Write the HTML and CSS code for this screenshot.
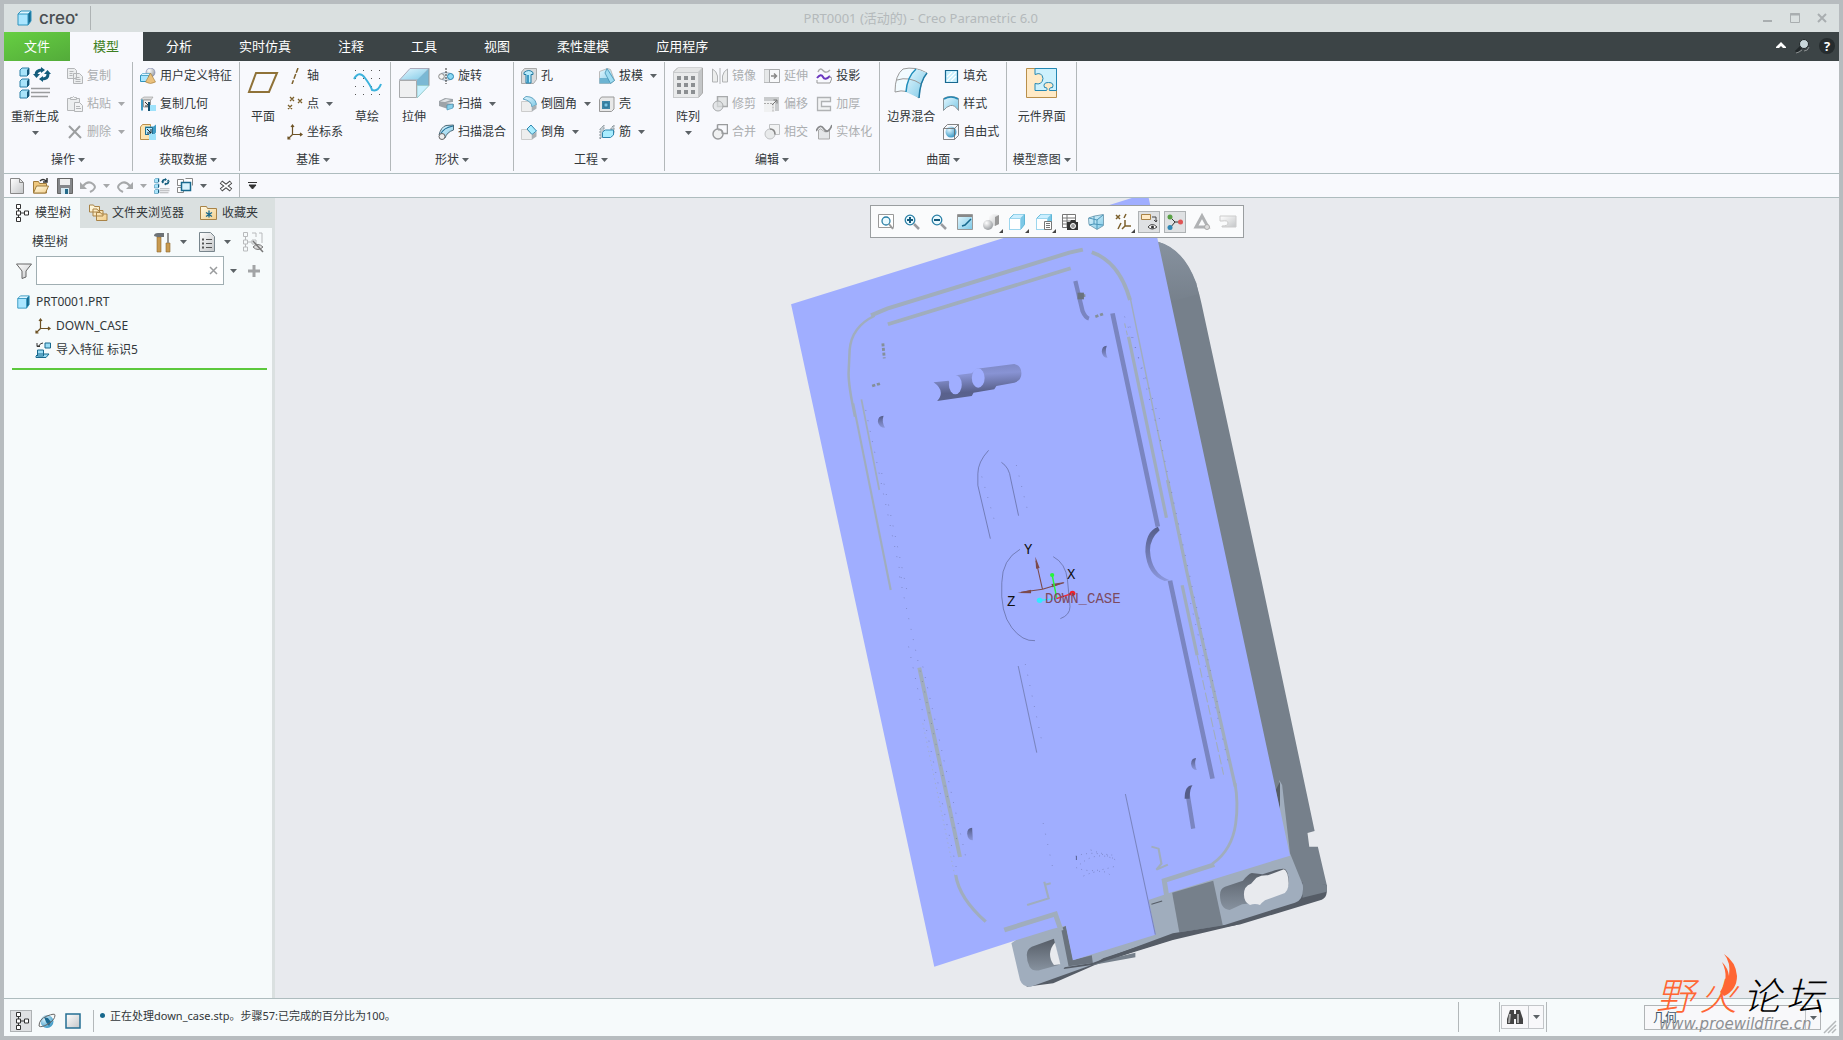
FILE: index.html
```html
<!DOCTYPE html>
<html lang="zh-CN">
<head>
<meta charset="utf-8">
<title>PRT0001 (活动的) - Creo Parametric 6.0</title>
<link rel="stylesheet" href="styles.css">
</head>
<body>
<svg class="defs" aria-hidden="true">
<defs>
<linearGradient id="blue" x1="0" y1="0" x2="1" y2="1"><stop offset="0" stop-color="#e6f8ff"/><stop offset="1" stop-color="#7cc8e6"/></linearGradient>
<linearGradient id="gray" x1="0" y1="0" x2="1" y2="1"><stop offset="0" stop-color="#fff"/><stop offset="1" stop-color="#c4c6c8"/></linearGradient>
<linearGradient id="gold" x1="0" y1="0" x2="1" y2="1"><stop offset="0" stop-color="#fffbe6"/><stop offset="1" stop-color="#f3cf8c"/></linearGradient>
<radialGradient id="ball" cx=".35" cy=".3" r=".8"><stop offset="0" stop-color="#fff"/><stop offset="1" stop-color="#909498"/></radialGradient>
<radialGradient id="bball" cx=".35" cy=".3" r=".8"><stop offset="0" stop-color="#e0f6ff"/><stop offset="1" stop-color="#2a8fc0"/></radialGradient>
<linearGradient id="slot" x1="0" y1="0" x2="0" y2="1"><stop offset="0" stop-color="#555c66"/><stop offset="1" stop-color="#87929f"/></linearGradient>
<linearGradient id="side" x1="0" y1="0" x2="0" y2="1"><stop offset="0" stop-color="#87929f"/><stop offset="1" stop-color="#76808b"/></linearGradient>
<linearGradient id="tube" x1="0" y1="0" x2=".15" y2="1"><stop offset="0" stop-color="#7a85c0"/><stop offset=".35" stop-color="#8893d4"/><stop offset=".8" stop-color="#59618c"/><stop offset="1" stop-color="#5a638e"/></linearGradient>
<linearGradient id="dent" x1="0" y1="0" x2="0" y2="1"><stop offset="0" stop-color="#555d88"/><stop offset="1" stop-color="#8b97dc"/></linearGradient>
<symbol id="cube" viewBox="0 0 16 16"><path d="M2 4l3-3h10l-3 3z" fill="#dff6ff"/><path d="M12 4l3-3v10l-3 4z" fill="#17688d"/><path d="M2 4h10v11H2z" fill="#aae6ff"/><path d="M2 15V4l3-3h10v10l-3 4zM2 4h10v11M12 4l3-3" fill="none" stroke="#2f94be"/></symbol>
<symbol id="copy" viewBox="0 0 16 16"><path d="M.5.5h7l2 2v8h-9zM6.500 5.500h6l3 3v7h-9z" fill="#eceeef" stroke="#b4b6b8"/><path d="M2.500 3.500h4M2.500 5.500h3M2.500 7.500h3M8.500 9.500h4M8.500 11.500h5M8.500 13.500h5" stroke="#b4b6b8"/></symbol>
<symbol id="paste" viewBox="0 0 16 16"><path d="M.5 2.500h12v12H.5z" fill="#eceeef" stroke="#b4b6b8"/><path d="M3.500 3.500V1.500h2l1-1 1 1h2v2zM7.500 6.500h5l3 3v6h-8z" fill="#f2f3f4" stroke="#b4b6b8"/><path d="M9 10.500h4M9 12.500h5" stroke="#b4b6b8"/></symbol>
<symbol id="del" viewBox="0 0 16 16"><path d="M2 2l12 12M13 2L2 14" stroke="#9c9ea0" stroke-width="2"/></symbol>
<symbol id="udf" viewBox="0 0 16 16"><circle cx="10.500" cy="4.500" r="4.500" fill="url(#ball)" stroke="#7a84b8" stroke-width=".6"/><path d="M.5 7.500h8v6h-8z" fill="#aae6ff" stroke="#2f94be"/><path d="M.5 7.500l2-2h8l-2 2z" fill="#dff6ff" stroke="#2f94be" stroke-width=".6"/><path d="M10.500 5l5 9q-5 3-10 0z" fill="#eac07c" stroke="#a07838" stroke-width=".6"/></symbol>
<symbol id="cgeo" viewBox="0 0 16 16"><path d="M1 3l3-2h9l-2 3H1z" fill="#ddd" stroke="#999" stroke-width=".6"/><path d="M1 3.500h2v11H1z" fill="#3f9bc4"/><path d="M3.500 4h7v7h-7z" fill="#eee" stroke="#999"/><path d="M5 6l4 4M9 6v4H5" stroke="#333" fill="none"/><path d="M8 6h2v9H8z" fill="#134f6e"/><path d="M10 9h6v6h-6z" fill="#9fe2fb"/></symbol>
<symbol id="wrap" viewBox="0 0 16 16"><path d="M.5 3l2-2.500h8v15h-10z" fill="#fde4b0" stroke="#b98f4b"/><path d="M5 2.500h8.500L16 .5v8L14 11H5z" fill="#3f9bc4"/><path d="M5.500 3.500h7v7h-7z" fill="#aae6ff" stroke="#1f6c90"/><path d="M7 5l4 4M11 5v4H7" stroke="#222" fill="none"/><path d="M9 10h7v6H9z" fill="#9fe2fb"/></symbol>
<symbol id="axis" viewBox="0 0 16 16"><path d="M11 0L5 16" stroke="#7c602c" stroke-width="1.500" stroke-dasharray="5 1.500"/></symbol>
<symbol id="pts" viewBox="0 0 16 16"><path d="M3 1l4 4M7 1L3 5M11 3l4 4M15 3l-4 4M1 9l4 4M5 9l-4 4" stroke="#7c602c" stroke-width="1.300"/></symbol>
<symbol id="csys" viewBox="0 0 16 16"><path d="M5.500 1v9.500H15M5.500 10.500L1 15M4 3l1.500-2L7 3M13 9l2 1.500-2 1.500M1 12.500V15h2.500" fill="none" stroke="#6d5225" stroke-width="1.200"/></symbol>
<symbol id="rev" viewBox="0 0 16 16"><path d="M3 5.500q4-2 10 0v6q-6 2-9 0" fill="#dfe9ee" stroke="#9ab"/><circle cx="3.500" cy="8.500" r="2.800" fill="#f4f4f4" stroke="#888"/><circle cx="12.500" cy="8.500" r="3" fill="#8cd8f4" stroke="#2f86ae"/><path d="M8 0v16" stroke="#333" stroke-dasharray="2 1"/></symbol>
<symbol id="sweep" viewBox="0 0 16 16"><path d="M1 5l6-3 8 1v3l-7 1 8 1v3l-6 2-9-3z" fill="#9da3a8"/><path d="M2 5.500l6-2.500 5 1-6 2z" fill="#e2e5e8"/><path d="M9 9l6-1v4l-6 2z" fill="#8bd0ea" stroke="#3a8cb0" stroke-width=".6"/></symbol>
<symbol id="swb" viewBox="0 0 16 16"><path d="M1 11Q3 3 8 1.500L15.500 1v5Q9 8 7 14z" fill="url(#blue)" stroke="#4d6a78"/><path d="M3 10q2-6 12-8" stroke="#1d6c94" stroke-width="1.200" fill="none"/><circle cx="4" cy="12.500" r="3" fill="#eee" stroke="#666"/></symbol>
<symbol id="hole" viewBox="0 0 16 16"><path d="M.5 4l3-3.500h12v11l-3 4H.5z" fill="#d9dbdd" stroke="#aaa"/><path d="M3 4.500q5-4 9 0v2h-2v8.500H5V6.500H3z" fill="#b9ecfd" stroke="#227ba3"/><path d="M6 7h2v8H6z" fill="#3f9bc4"/></symbol>
<symbol id="round" viewBox="0 0 16 16"><path d="M.5 5.500H8q3 2 3 5v5H.5z" fill="#eee" stroke="#ccc"/><path d="M2 3L5 .5q9 0 10.500 8L11 11Q11 5 2 3z" fill="url(#blue)" stroke="#5fa4c2"/><path d="M11 11l4.500-2.500v4L11 15.500z" fill="#aab0b4"/></symbol>
<symbol id="chamf" viewBox="0 0 16 16"><path d="M.5 5.500H6l5 5v5H.5z" fill="#eee" stroke="#ccc"/><path d="M6 5l4-4 5.500 6L11 10.500z" fill="#a9edff" stroke="#2f86ae"/><path d="M11 11l4.500-3.500v5L11 15.500z" fill="#aab0b4"/></symbol>
<symbol id="draft" viewBox="0 0 16 16"><path d="M.5 3.500l8-3 3 1 4 11-4 3H.5z" fill="url(#blue)" stroke="#bbb"/><path d="M.5 10h10v5.500H.500z" fill="#6db4d2"/><path d="M8 .5l7.500 12-4 3L6 5z" fill="#9fdcf2" stroke="#3487ab" stroke-width=".7"/></symbol>
<symbol id="shell" viewBox="0 0 16 16"><path d="M.5 3.500l2-2.500h12.500v12l-2.500 2.500H.5z" fill="#e8e8e8" stroke="#999"/><path d="M3 5h8v8H3z" fill="#3f87a8"/><path d="M5 7h4v4H5z" fill="#7cc8e6" stroke="#2a6f90"/></symbol>
<symbol id="rib" viewBox="0 0 16 16"><path d="M1 15V5l4-4v10zM12 12V4l3-3v9z" fill="#c2ccd2" stroke="#8a9499" stroke-dasharray="2 1"/><path d="M3.500 8.500q1-2 3-2.500h8v5l-3 2.500h-8z" fill="#a9edff" stroke="#2f86ae"/></symbol>
<symbol id="mirror" viewBox="0 0 16 16"><path d="M.5 1q4 2 5 7v6H.5zM15.500 1q-4 2-5 7v6h5z" fill="#eceded" stroke="#b0b2b4"/><path d="M8 0v16" stroke="#b0b2b4"/></symbol>
<symbol id="trim" viewBox="0 0 16 16"><path d="M5.500.5h10v10h-10z" fill="#e3e5e6" stroke="#a8aaac" stroke-width="1.500"/><circle cx="6" cy="10" r="5" fill="#dcdee0" fill-opacity=".7" stroke="#a8aaac"/></symbol>
<symbol id="merge" viewBox="0 0 16 16"><path d="M5.500.5h10v9h-5" fill="none" stroke="#999b9d" stroke-width="1.500"/><path d="M5.500.5v5" stroke="#999b9d" stroke-width="1.500"/><circle cx="6" cy="10" r="5" fill="#f0f1f2" stroke="#999b9d" stroke-width="1.500"/><path d="M6 6h4v4" fill="none" stroke="#999b9d"/></symbol>
<symbol id="inter" viewBox="0 0 16 16"><path d="M5.500.5h10v10h-10z" fill="#f2f3f4" stroke="#c0c2c4"/><circle cx="6" cy="10" r="5" fill="#e8eaeb" stroke="#c0c2c4"/><path d="M6 5q5 0 5 5.500" fill="none" stroke="#888" stroke-width="1.500"/></symbol>
<symbol id="extend" viewBox="0 0 16 16"><path d="M0 1.500h15.500v13H0z" fill="#e6e8e9" stroke="#b8babc"/><path d="M5.500 1.500h10v13h-10z" fill="#f8f9fb" stroke="#a8aaac"/><path d="M7 8h5M10 5.500L12.500 8 10 10.500" stroke="#888" stroke-width="1.500" fill="none"/></symbol>
<symbol id="offset" viewBox="0 0 16 16"><path d="M0 1h15v14h-4V5H0z" fill="#c9cbcd"/><path d="M0 5h11v11H0z" fill="#f0f1f2"/><path d="M0 7.500h9v8" fill="none" stroke="#aaa" stroke-dasharray="2 1"/><path d="M8 9l5-5M9.500 4H13v3.500" fill="none" stroke="#777"/></symbol>
<symbol id="project" viewBox="0 0 16 16"><path d="M2 4q2-5 5-1.500T14 2" fill="none" stroke="#aaa" stroke-width="1.500"/><path d="M1 10q4-5 6-1t7-1" fill="none" stroke="#6b36c0" stroke-width="2"/><path d="M1 12v3h13l2-5-3-1" fill="none" stroke="#999"/></symbol>
<symbol id="thick" viewBox="0 0 16 16"><path d="M1.500 1.500h13v4h-9v5h9v4h-13z" fill="#f2f3f4" stroke="#b0b2b4" stroke-width="1.300"/></symbol>
<symbol id="solid" viewBox="0 0 16 16"><path d="M2.500 6v9h11V5Q9 10 6.500 6q-2-2.500-4 0z" fill="#e4e6e8" stroke="#aaa"/><path d="M0 7Q4-1 8 5t8-4" fill="none" stroke="#88898b" stroke-width="1.800"/></symbol>
<symbol id="fill" viewBox="0 0 16 16"><path d="M2.500 2.500h12v12h-12z" fill="#c5effd" stroke="#186890" stroke-width="1.200"/><path d="M4 9l5-5M4 13l9-9M8 13l5-5" stroke="#fff" stroke-width="1.200"/></symbol>
<symbol id="style" viewBox="0 0 16 16"><path d="M.5 2.500q7-4 15 0v12q-4-6-8-5t-7 5z" fill="url(#blue)" stroke="#8a9499"/><path d="M1 3q7-4 14 0" fill="none" stroke="#2387b4" stroke-width="1.500"/></symbol>
<symbol id="free" viewBox="0 0 16 16"><circle cx="8" cy="8" r="5.500" fill="url(#bball)"/><path d="M.5 4.500l4-4h11v11l-4 4H.5zM.5 4.500h11v11M11.500 4.500l4-4" fill="none" stroke="#666" stroke-width=".8"/></symbol>
<symbol id="tree" viewBox="0 0 14 18"><path d="M1.500.5h4v4h-4zM1.500 7h4v4h-4zM1.500 13.500h4v4h-4zM9.500 7h4v4h-4z" fill="#fff" stroke="#333"/><path d="M3.500 5v2M3.500 11v2.500M6 9h3.500" stroke="#333"/></symbol>
<symbol id="lens" viewBox="0 0 16 16"><circle cx="6" cy="6" r="4.800" fill="#eafaff" stroke="#2a7fa6" stroke-width="1.300"/><path d="M10 10l5 5" stroke="#9a9ca0" stroke-width="2.500"/></symbol>
<symbol id="import" viewBox="0 0 16 16"><path d="M10 1h5.500v5H10zM1 14l2-2h11l-3 3.500H1zM2.500 8h6v6h-6z" fill="#9adcf5" stroke="#17688d"/><path d="M2 4h2q1-3 4-3M2 1v3.500h3" fill="none" stroke="#333"/></symbol>
<symbol id="regen" viewBox="0 0 32 32"><path d="M1 3l2-2h7v6l-2 2H1zM1 14l2-2h7v6l-2 2H1zM1 25l2-2h7v6l-2 2H1z" fill="#a8e4fb" stroke="#2b7fa6"/><path d="M8 3l2-2v6L8 9zM8 14l2-2v6l-2 2zM8 25l2-2v6l-2 2z" fill="#17587a"/><path d="M12 21.500h19M12 25.500h19M12 29.500h17" stroke="#9a9c9e" stroke-width="1.500"/><path d="M17 8q0-5 6-5M29 7q0 5-6 5" fill="none" stroke="#135c7c" stroke-width="3"/><path d="M14 7h7l-3.500 4zM25 7h7l-3.500-4zM22 0v6l4-3zM24 9v6l-4-3z" fill="#135c7c"/></symbol>
<symbol id="down" viewBox="0 0 7 4"><path d="M0 0h7L3.500 4z" fill="currentColor"/></symbol>
<symbol id="scube" viewBox="0 0 16 16"><path d="M.5 4.500l4-4h11v10l-4 5H.5z" fill="#7cc8e6" stroke="#5fb6d6"/><path d="M1 4.500l4-4h10l-4 4z" fill="#ccefff"/><path d="M.5 4.500h11v11H.5z" fill="#fff" stroke="#9cd6ee"/></symbol>
</defs>
</svg>

<div class="window">
<header class="titlebar">
  <span class="brand"><svg width="16" height="16"><use href="#cube"/></svg>creo<sup>•</sup></span>
  <span class="caption">PRT0001 (活动的) - Creo Parametric 6.0</span>
  <span class="wincontrols">
    <button aria-label="最小化"><svg width="10" height="10"><path d="M0 8h9" stroke="currentColor" stroke-width="2"/></svg></button>
    <button aria-label="最大化"><svg width="10" height="10"><path d="M.5.5h9v9h-9z" stroke="currentColor" fill="none"/><path d="M0 1.500h10" stroke="currentColor" stroke-width="2"/></svg></button>
    <button aria-label="关闭"><svg width="10" height="10"><path d="M1 1l8 8M9 1L1 9" stroke="currentColor" stroke-width="2"/></svg></button>
  </span>
</header>
<nav class="tabs">
  <button class="file">文件</button><button class="active">模型</button><button>分析</button><button>实时仿真</button><button>注释</button><button>工具</button><button>视图</button><button>柔性建模</button><button>应用程序</button>
  <span class="tabtools">
    <button aria-label="折叠功能区"><svg width="12" height="7"><path d="M1 5l5-5 5 5v1H8L6 4 4 6H1z" fill="#fff"/></svg></button>
    <button aria-label="搜索"><svg width="16" height="16"><path d="M6 9l-5 5" stroke="#22282a" stroke-width="3"/><path d="M1 15l3-1 3-2M9 13q4 0 5-4" fill="none" stroke="#8a8f90"/><circle cx="9" cy="6" r="4.500" fill="#c8d6da" stroke="#22282a"/></svg></button>
    <button class="help" aria-label="帮助">?</button>
  </span>
</nav>

<section class="ribbon">
  <div class="group"><div class="body">
    <button class="big wide"><svg width="32" height="32"><use href="#regen"/></svg>重新生成<svg class="dn" width="7" height="4"><use href="#down"/></svg></button>
    <div class="col off">
      <button><svg width="16" height="16"><use href="#copy"/></svg>复制</button>
      <button><svg width="16" height="16"><use href="#paste"/></svg>粘贴<svg class="dn" width="7" height="4"><use href="#down"/></svg></button>
      <button><svg width="16" height="16"><use href="#del"/></svg>删除<svg class="dn" width="7" height="4"><use href="#down"/></svg></button>
    </div></div><button class="label">操作<svg width="7" height="4"><use href="#down"/></svg></button></div>

  <div class="group flat"><div class="body"><div class="col">
      <button><svg width="16" height="16"><use href="#udf"/></svg>用户定义特征</button>
      <button><svg width="16" height="16"><use href="#cgeo"/></svg>复制几何</button>
      <button><svg width="16" height="16"><use href="#wrap"/></svg>收缩包络</button>
    </div></div><button class="label">获取数据<svg width="7" height="4"><use href="#down"/></svg></button></div>

  <div class="group datum"><div class="body">
    <button class="big"><svg width="32" height="32"><path d="M9 6h21l-8 19H2z" fill="none" stroke="#8f7238" stroke-width="2"/></svg>平面</button>
    <div class="col">
      <button><svg width="16" height="16"><use href="#axis"/></svg>轴</button>
      <button><svg width="16" height="16"><use href="#pts"/></svg>点<svg class="dn" width="7" height="4"><use href="#down"/></svg></button>
      <button><svg width="16" height="16"><use href="#csys"/></svg>坐标系</button>
    </div>
    <button class="big slim"><svg width="32" height="32"><path d="M4 3.500h26M4 11.500h26M4 19.500h26M4 27.500h26" stroke="#555" stroke-dasharray="1 7"/><path d="M3 12Q8 3 14 11t7 12q6 2 9-6" fill="none" stroke="#3bb2dc" stroke-width="2"/></svg>草绘</button>
    </div><button class="label">基准<svg width="7" height="4"><use href="#down"/></svg></button></div>

  <div class="group"><div class="body">
    <button class="big"><svg width="32" height="32"><path d="M1.500 13L12 1.500h19L20 13z" fill="url(#blue)" stroke="#aab"/><path d="M19 13L31 1.500v17H19z" fill="#7ab8d4"/><path d="M19 18.500h12L19 31z" fill="#c8f1ff" stroke="#9cc"/><path d="M31 1.500v17" stroke="#999"/><path d="M1.500 13.500h17v17h-17z" fill="#eff0f1" stroke="#a8aaac"/></svg>拉伸</button>
    <div class="col">
      <button><svg width="16" height="16"><use href="#rev"/></svg>旋转</button>
      <button><svg width="16" height="16"><use href="#sweep"/></svg>扫描<svg class="dn" width="7" height="4"><use href="#down"/></svg></button>
      <button><svg width="16" height="16"><use href="#swb"/></svg>扫描混合</button>
    </div></div><button class="label">形状<svg width="7" height="4"><use href="#down"/></svg></button></div>

  <div class="group flat"><div class="body">
    <div class="col">
      <button><svg width="16" height="16"><use href="#hole"/></svg>孔</button>
      <button><svg width="16" height="16"><use href="#round"/></svg>倒圆角<svg class="dn" width="7" height="4"><use href="#down"/></svg></button>
      <button><svg width="16" height="16"><use href="#chamf"/></svg>倒角<svg class="dn" width="7" height="4"><use href="#down"/></svg></button>
    </div>
    <div class="col">
      <button><svg width="16" height="16"><use href="#draft"/></svg>拔模<svg class="dn" width="7" height="4"><use href="#down"/></svg></button>
      <button><svg width="16" height="16"><use href="#shell"/></svg>壳</button>
      <button><svg width="16" height="16"><use href="#rib"/></svg>筋<svg class="dn" width="7" height="4"><use href="#down"/></svg></button>
    </div></div><button class="label">工程<svg width="7" height="4"><use href="#down"/></svg></button></div>

  <div class="group"><div class="body">
    <button class="big"><svg width="32" height="32"><path d="M1.500 5l4-4h25v25l-4 4.500h-25z" fill="#c4c6c8" stroke="#aaa"/><path d="M2 5l4-4h24l-4 4z" fill="#e4e5e6"/><path d="M1.500 5.500h25v25h-25z" fill="#e9eaeb" stroke="#c8cacc"/><path d="M5 11h18M5 18h18M5 25h18" stroke="#8c8f92" stroke-width="4" stroke-dasharray="4 3"/></svg>阵列<svg class="dn" width="7" height="4"><use href="#down"/></svg></button>
    <div class="col off">
      <button><svg width="16" height="16"><use href="#mirror"/></svg>镜像</button>
      <button><svg width="16" height="16"><use href="#trim"/></svg>修剪</button>
      <button><svg width="16" height="16"><use href="#merge"/></svg>合并</button>
    </div>
    <div class="col off">
      <button><svg width="16" height="16"><use href="#extend"/></svg>延伸</button>
      <button><svg width="16" height="16"><use href="#offset"/></svg>偏移</button>
      <button><svg width="16" height="16"><use href="#inter"/></svg>相交</button>
    </div>
    <div class="col off">
      <button class="on"><svg width="16" height="16"><use href="#project"/></svg>投影</button>
      <button><svg width="16" height="16"><use href="#thick"/></svg>加厚</button>
      <button><svg width="16" height="16"><use href="#solid"/></svg>实体化</button>
    </div></div><button class="label">编辑<svg width="7" height="4"><use href="#down"/></svg></button></div>

  <div class="group"><div class="body">
    <button class="big wide"><svg width="32" height="32"><path d="M0 25Q0 8 8 2q12-3 24 4-7 8-8 25-12-10-24-6z" fill="#f2fbff" stroke="#999"/><path d="M11 25Q12 10 21 2l11 4q-7 8-8 25z" fill="url(#blue)"/><path d="M2 13q12-4 24 4" fill="none" stroke="#999"/><path d="M11 25Q12 10 21 2" fill="none" stroke="#1f8ebc" stroke-width="1.500"/><path d="M32 6q-7 8-8 25" fill="none" stroke="#1f7aa4" stroke-width="1.500"/></svg>边界混合</button>
    <div class="col">
      <button><svg width="16" height="16"><use href="#fill"/></svg>填充</button>
      <button><svg width="16" height="16"><use href="#style"/></svg>样式</button>
      <button><svg width="16" height="16"><use href="#free"/></svg>自由式</button>
    </div></div><button class="label">曲面<svg width="7" height="4"><use href="#down"/></svg></button></div>

  <div class="group"><div class="body">
    <button class="big widest"><svg width="32" height="32"><path d="M.5 1.500h30v29H.5z" fill="#ffeac6" stroke="#b98f4b"/><path d="M9 1.500h21.500v22h-7q-1-3 3-3 2-5-4-5-6 0-4 5 4 0 2 3H9v-7q7 2 8-5-1-7-8-4z" fill="#cdf1fd" stroke="#2387b4"/></svg>元件界面</button>
    </div><button class="label">模型意图<svg width="7" height="4"><use href="#down"/></svg></button></div>
</section>

<div class="quick">
  <button aria-label="新建"><svg width="16" height="16"><path d="M1.500.5h9l4 4v11h-13z" fill="url(#gray)" stroke="#888"/><path d="M10.500.5v4h4" fill="none" stroke="#888"/></svg></button>
  <button aria-label="打开"><svg width="18" height="16"><path d="M1.500 15V3.500h5l1 2h7V15z" fill="#eec77e" stroke="#a07c3c"/><path d="M1.500 15l3-7h12l-3 7z" fill="url(#gold)" stroke="#a07c3c"/><path d="M8 3q3-3 6 0M15 0v4h-4" fill="none" stroke="#333" stroke-width="1.500"/></svg></button>
  <button aria-label="保存"><svg width="16" height="16"><path d="M.5.5h15v15H.5z" fill="#85878a" stroke="#666"/><path d="M3 1h10v6H3z" fill="#eee"/><path d="M4 10h8v6H4z" fill="#d8eaf2"/><path d="M8 11h3v5H8z" fill="#246a8a"/></svg></button>
  <button class="dim" aria-label="撤消"><svg width="16" height="16"><path d="M3 8q5-6 10-2t-3 8" fill="none" stroke="#a6a8aa" stroke-width="2"/><path d="M0 4v7h7z" fill="#a6a8aa"/></svg><svg width="7" height="4"><use href="#down"/></svg></button>
  <button class="dim" aria-label="重做"><svg width="16" height="16"><path d="M13 8Q8 2 3 6t3 8" fill="none" stroke="#a6a8aa" stroke-width="2"/><path d="M16 4v7H9z" fill="#a6a8aa"/></svg><svg width="7" height="4"><use href="#down"/></svg></button>
  <button aria-label="重新生成"><svg width="16" height="16"><use href="#regen"/></svg></button>
  <button aria-label="窗口"><svg width="16" height="16"><path d="M.5 1.500h6v6h-6zM8.500.5h7v7M.5 9.500h6v5h-6z" fill="#fff" stroke="#888"/><path d="M4.500 4.500h9v8h-9z" fill="#d8f2fc" stroke="#17688d" stroke-width="1.500"/></svg><svg width="7" height="4"><use href="#down"/></svg></button>
  <button class="shut" aria-label="关闭窗口"><svg width="12" height="12"><path d="M1 2l10 8M11 2L1 10" stroke="#444" stroke-width="4"/><path d="M1.500 2.500l9 7M10.500 2.500l-9 7" stroke="#fff" stroke-width="1.800"/></svg></button>
  <button class="more" aria-label="自定义"><svg width="9" height="8"><path d="M0 .5h9M1 3h7L4.500 7z" stroke="#333" fill="#333"/></svg></button>
</div>

<main>
<aside>
  <div class="ptabs">
    <button class="active"><svg width="14" height="18"><use href="#tree"/></svg>模型树</button>
    <button><svg width="20" height="20"><path d="M1.500 9V2h4l1 1.500h5V9zM5 13V6h4l1 1.500h5V13zM8.500 17.500v-8h4l1 1.500h5.500v6.500z" fill="url(#gold)" stroke="#a98346"/></svg>文件夹浏览器</button>
    <button><svg width="18" height="16"><path d="M.5 14.500V1.500h6l1 2h9v11z" fill="url(#gold)" stroke="#a98346"/><path d="M9 5.500v7M6 7.500l6 4M12 7.500l-6 4" stroke="#17688d" stroke-width="1.300"/></svg>收藏夹</button>
  </div>
  <div class="phead"><span>模型树</span>
    <button aria-label="设置"><svg width="18" height="20"><path d="M4 5h4v15H4zM13 11h4v9h-4z" fill="#c89a50" stroke="#92692c" stroke-width=".6"/><path d="M1 4q0-3 4-3h6v4H4z" fill="#6d7276"/><path d="M15 1v10" stroke="#888" stroke-width="1.800"/></svg><svg width="7" height="4"><use href="#down"/></svg></button>
    <button aria-label="显示"><svg width="16" height="20"><path d="M.5.5h11l4 4v15H.5z" fill="url(#gray)" stroke="#78858c"/><path d="M7 7.500h6M7 11.500h6M7 15.500h6" stroke="#555"/><path d="M3 7.500h2M3 11.500h2M3 15.500h2" stroke="#555" stroke-width="2"/></svg><svg width="7" height="4"><use href="#down"/></svg></button>
    <button aria-label="隐藏"><svg width="21" height="20"><path d="M.5.5h4v4h-4zM.5 8h4v4h-4zM.5 15h4v4h-4zM9 8h4v4H9zM2.500 5v3M2.500 12v3M5 10h4M9 1h4v4M16 1h3v10" fill="none" stroke="#b8babc"/><path d="M10 15q5-5 10 0-5 5-10 0z" fill="#ddd" stroke="#777"/><path d="M10 9l10 11" stroke="#777" stroke-width="1.500"/></svg></button>
  </div>
  <div class="filter">
    <svg width="16" height="16"><path d="M.5 1h15L10 8v6l-4 1.500V8z" fill="url(#gray)" stroke="#666"/></svg>
    <div class="search"><input type="text" aria-label="过滤"><button aria-label="清除"><svg width="9" height="9"><path d="M1 1l7 7M8 1L1 8" stroke="#9a9c9e" stroke-width="1.500"/></svg></button></div>
    <button aria-label="历史"><svg width="7" height="4"><use href="#down"/></svg></button>
    <button aria-label="添加"><svg width="12" height="12"><path d="M6 0v12M0 6h12" stroke="#a2a4a6" stroke-width="3"/></svg></button>
  </div>
  <ul class="tree">
    <li><svg width="14" height="14"><use href="#cube"/></svg>PRT0001.PRT</li>
    <li class="child"><svg width="16" height="16"><use href="#csys"/></svg>DOWN_CASE</li>
    <li class="child"><svg width="16" height="16"><use href="#import"/></svg>导入特征 标识5</li>
  </ul>
  <hr>
</aside>

<section class="viewport">
<svg class="model" viewBox="777 198 560 800" width="560" height="800">
<g transform="translate(780 190) scale(.35714 .33333)">
  <path d="M1058 155Q1150 185 1180 340L1348 1170 1497 1923 1477 1929 1482 1970 1506 1970 1531 2085 1463 2100 1200 2100z" fill="#76808b"/>
  <path d="M1058 155Q1130 175 1166 280L1172 312 1080 340z" fill="url(#side)"/>
  <g transform="translate(0 1170)">
    <path d="M1531 915v22q-2 18-14 22L1290 1033 1180 1054 1094 1080 997 1112 880 1156 765 1210 690 1220 800 1060 1400 900z" fill="#555c66"/>
    <path d="M1463 900l68 15v20l-68 18z" fill="#76808b"/>
    <path d="M875 1148l120-30v14l-115 22z" fill="#76808b"/>
    <path d="M1398 600l8 15L1428 820l36 95q4 45-22 53L1245 1035 1110 1062 905 1135 880 1152 702 1220Q680 1222 672 1200L648 1090 760 1000 1060 850 1398 800z" fill="#a0adbd"/>
    <path d="M1098 938l115-36 27 135-122 20z" fill="#76808b"/>
    <path d="M1100 1060l145-24 45-4-190 48-226 75-80 12 3-5 80-14z" fill="#555c66"/>
    <path d="M1232 945q0-20 14-25l50-18q15-20 25-23l30 4 35-12q20-7 28-4 11 10 10 40 0 25-20 33l-80 30q-20 2-30 3l-35 17q-27-3-27-45z" fill="url(#slot)"/>
    <path d="M1299 943q0-25 20-32l15-18q15-8 32-7l45-18q12 5 13 42-1 28-16 31l-50 20q-10 8-14 14-14-6-28 0-17-7-17-32z" fill="#e8eaee"/>
    <path d="M691 1125q0-18 14-25l62-24 16 78-52 15q-22 8-32-8-8-16-8-36z" fill="url(#slot)"/>
    <path d="M770 1088l15 65-18 2q-11-15-11-33 2-22 14-34z" fill="#e8eaee"/>
    <path d="M787 1045l14-8 20 103 52-14 3 23-68 10z" fill="#6a737e"/>
    <path d="M1400 605v85l-12-60z" fill="#555c66"/>
  </g>
  <path d="M31 343L985 24l47-2 396 1975-330 109-66 24 19 104-231 77-20-104-38 10-114 38-216 75z" fill="#a0aeff"/>
  <path d="M1040 2143l30-10" stroke="#555c66" stroke-width="3"/>

  <g fill="none" stroke="#a0adbd">
    <path d="M255 376l45-20 510-168 38-9" stroke-width="12"/>
    <path d="M302 403L814 235" stroke-width="11"/>
    <path d="M265 377Q200 410 195 480l-3 70q0 40 18 130" stroke-width="7"/>
    <path d="M205 640L310 1200" stroke-width="6"/>
    <path d="M228 628L278 900" stroke-width="5"/>
    <path d="M873 187Q950 215 980 330" stroke-width="11"/>
    <path d="M980 320l75 390 40 205" stroke-width="4"/>
    <path d="M965 400l15 70" stroke-width="3" stroke-dasharray="14 8"/>
    <path d="M976 440l106 543" stroke-width="9"/>
    <path d="M1085 870l55 280 135 640" stroke-width="9"/>
    <path d="M1126 1186l42 210" stroke-width="9"/>
    <path d="M1168 1396l74 358" stroke-width="3" stroke-dasharray="30 8"/>
    <path d="M1274 1780q10 60 2 120-10 80-66 122" stroke-width="8"/>
    <path d="M1216 2024l-140 48 8 55" stroke-width="14"/>
    <path d="M390 1433l114 568" stroke-width="11"/>
    <path d="M400 1600l92 470" stroke-width="2" stroke-dasharray="4 10"/>
    <path d="M492 2055q10 70 84 140" stroke-width="9"/>
    <path d="M628 2220l143-48 16 50" stroke-width="14"/>
    <path d="M740 2075l12 50-60 20M740 2085l18-5M1040 1970l20 6 8 45-14 18 32-15" stroke-width="6"/>
  </g>
  <path d="M288 460l4 45M258 588l25-8M832 317h24M883 380l26-10" stroke="#848f9a" stroke-width="8" stroke-dasharray="9 5"/>
  <g fill="none" stroke="#7a85c0">
    <path d="M931 370l127 640M1092 1172l119 594" stroke-width="13"/>
    <path d="M827 273l20 90q8 20 18 23M1141 1810l16 106" stroke-width="12"/>
    <path d="M667 1428l52 260M967 1812l84 422" stroke-width="3"/>
  </g>
  <path d="M842 308v20" stroke="#6a737e" stroke-width="18"/>
  <path d="M1058 1010q-35 15-35 75 5 70 54 88l14-2q-52-20-55-90 0-35 27-60z" fill="url(#dent)"/>
  <path d="M1155 1786q-22 0-22 40h14q0-30 8-40z" fill="#555d88"/>
  <g fill="url(#dent)"><path d="M915 467q-14 0-14 18 2 18 16 18-8-18-2-36z"/><path d="M290 677q-16 0-16 18 3 18 20 18-10-18-4-36z"/><path d="M1165 1704q-14 0-14 18 2 18 16 18-8-18-2-36z"/><path d="M538 1913q-14 0-14 18 2 20 16 20z"/></g>
  <path d="M430 577l42-5 6 10 14-26 45-6 14-14 105-14q20 5 20 28 0 22-20 28l-50 10-6 10-58 10-5 10-97 15q25-30-10-56z" fill="url(#tube)"/>
  <ellipse cx="491" cy="584" rx="18" ry="29" fill="#a0aeff"/><ellipse cx="555" cy="564" rx="18" ry="29" fill="#a0aeff"/>
  <g fill="none" stroke="#5d6697" stroke-width="2">
    <path d="M584 781q-30 35-30 70v35l35 160M620 817q22 15 26 50l22 110"/>
    <path d="M672 1078q-50 30-51 100-5 90 28 135 30 42 65 39M765 1100q35 20 40 70l7 80q0 25-27 36"/>
    <path d="M240 660l105 530M285 850l70 350M335 1160l160 790M360 1370l135 670M400 1430l120 570M965 380l105 330M980 410l90 360M1065 750l170 840M1150 1240l110 500M565 860l35 130M662 826l30 130M687 1423l45 225M737 1900l30 150" stroke-dasharray="2 30"/>
    <path d="M828 1998q60-20 110 10M840 2023q50-45 105-10M830 2033q40 20 110-5M850 2058q60-30 80 5M870 1980q40 15 60 15" stroke-dasharray="2 13"/>
    <path d="M830 1998v12" stroke-width="3"/>
  </g>
  <path d="M735 1198l-18-85M735 1198l60-20M735 1198l-60 9" stroke="#7c4a4c" stroke-width="3"/>
  <path d="M715 1100l2 36 10-2zM798 1176l-38 6 3 10zM665 1209l38 1 0-11z" fill="#7c4a4c"/>
  <path d="M762 1155l13 70" stroke="#25f53c" stroke-width="4"/>
  <path d="M774 1226l-47 5" stroke="#33eaff" stroke-width="4"/>
  <path d="M774 1226l45-16" stroke="#f2222c" stroke-width="4"/>
  <circle cx="762" cy="1155" r="6" fill="#25f53c"/><circle cx="727" cy="1231" r="8" fill="#33eaff"/><circle cx="819" cy="1210" r="8" fill="#f2222c"/>
</g>
<g class="cad"><text x="1024" y="554">Y</text><text x="1067" y="579">X</text><text x="1007" y="606">Z</text><text class="name" x="1045" y="603">DOWN_CASE</text></g>
</svg>

<div class="viewtools" role="toolbar">
  <button aria-label="重新调整"><svg width="16" height="16"><path d="M.5.5h15v13H.5z" fill="#fff" stroke="#999"/><circle cx="8" cy="7" r="4" fill="#eafaff" stroke="#2a7fa6" stroke-width="1.300"/><path d="M11 10l4 5" stroke="#999" stroke-width="2"/></svg></button>
  <button aria-label="放大"><svg width="16" height="16"><use href="#lens"/><path d="M3 6h6M6 3v6" stroke="#14587a" stroke-width="2"/></svg></button>
  <button aria-label="缩小"><svg width="16" height="16"><use href="#lens"/><path d="M3 6h6" stroke="#14587a" stroke-width="2"/></svg></button>
  <button aria-label="重画"><svg width="16" height="16"><path d="M.5.5h15v15H.5z" fill="url(#blue)" stroke="#999"/><path d="M1 2h14" stroke="#888" stroke-width="2"/><path d="M5 12l3-1 6-6" stroke="#17688d" stroke-width="1.500" fill="none"/></svg></button>
  <button class="menu" aria-label="渲染"><svg width="16" height="16"><path d="M6 2l4-2 6 1v9l-5 2-5-3z" fill="url(#gray)"/><path d="M12 3l4-2v9l-4 2z" fill="#999"/><circle cx="5" cy="11" r="5" fill="url(#ball)"/></svg></button>
  <button class="menu" aria-label="显示样式"><svg width="16" height="16"><use href="#scube"/></svg></button>
  <button class="menu" aria-label="已保存方向"><svg width="16" height="16"><use href="#scube"/><path d="M8.500 7.500h7v8h-7z" fill="#fff" stroke="#777"/><path d="M10 9.500h4M10 11.500h4M10 13.500h4" stroke="#777"/></svg></button>
  <button aria-label="视图管理器"><svg width="16" height="16"><path d="M.5.5h13v13H.5zM.5 4h13M.5 7h13M.5 10h13M5 .5v13" fill="#fff" stroke="#777"/><path d="M5 8h3l1-2h4l1 2h2v8H5z" fill="#333"/><circle cx="11" cy="12" r="2.500" fill="#999" stroke="#fff"/></svg></button>
  <button aria-label="透视图"><svg width="16" height="16"><path d="M.5 4l6-2 9-1.500v11L9 15.500l-8-5z" fill="url(#blue)" stroke="#7aa4b8"/><path d="M6 2v8l-5 1M6 10l9 1M9 15V6l6-5M9 6L1 4" stroke="#4b95b8" fill="none"/></svg></button>
  <button class="menu" aria-label="基准显示"><svg width="16" height="16"><path d="M1 1l4 4M5 1L1 5M11 0L9 4M6 9l-3 6M10 6v6h6M10 12l-3 3" fill="none" stroke="#7c602c" stroke-width="1.500"/></svg></button>
  <button class="pressed" aria-label="注释显示"><svg width="16" height="16"><path d="M.5.5h9v5h-9z" fill="#ffeac6" stroke="#a98346"/><path d="M11 3h4v5M13 6l2 2 1-2" fill="none" stroke="#444"/><path d="M7 13q4-5 9 0-5 4-9 0z" fill="#fff" stroke="#444"/><circle cx="11.500" cy="13" r="1.500" fill="#333"/></svg></button>
  <button class="pressed" aria-label="旋转中心"><svg width="16" height="16"><path d="M3 3l5 5 6 0M8 8l-5 6" fill="none" stroke="#333"/><circle cx="3" cy="3" r="2.500" fill="#5aa046"/><circle cx="13.500" cy="8" r="2.500" fill="#e05454"/><circle cx="3" cy="13.500" r="2.500" fill="#2f86b4"/></svg></button>
  <button aria-label="模拟"><svg width="16" height="16"><path d="M8 2l6 11H2z" fill="none" stroke="#b0b2b4" stroke-width="3"/><circle cx="13" cy="13" r="2.500" fill="#ddd" stroke="#aaa"/></svg></button>
  <button aria-label="分析"><svg width="16" height="16"><path d="M0 2h16v11H2v-1q6 0 6-3T2 7H0z" fill="url(#gray)" stroke="#ccc"/></svg></button>
</div>
</section>
</main>

<footer>
  <button class="pressed" aria-label="导航器"><svg width="14" height="18"><use href="#tree"/></svg></button>
  <button aria-label="浏览器"><svg width="16" height="16"><circle cx="8" cy="8.500" r="6.500" fill="url(#bball)"/><path d="M5 4l4 1 3 4-2 4-3-4z" fill="#186890"/><path d="M0 13Q0 6 8 3t8-1q0 5-7 9t-9 2z" fill="none" stroke="#666"/></svg></button>
  <button aria-label="全屏"><svg width="16" height="16"><path d="M1 1h14v14H1z" fill="url(#gray)" stroke="#246f94" stroke-width="1.500"/></svg></button>
  <p class="message">正在处理down_case.stp。步骤57:已完成的百分比为100。</p>
  <div class="find"><button aria-label="查找"><svg width="16" height="16"><path d="M3 1h4v4h2V1h4l3 9v5H9v-5H7v5H0v-5z" fill="#444"/><path d="M3 5l-1 9M11 5v9" stroke="#aaa" stroke-width="2"/></svg></button><button class="pick" aria-label="查找选项"><svg width="7" height="4"><use href="#down"/></svg></button></div>
  <div class="combo"><select aria-label="选择过滤器"><option>几何</option></select><span class="pull"><svg width="7" height="4"><use href="#down"/></svg></span></div>
  <svg class="grip" width="12" height="12"><path d="M0 12L12 0M4 12l8-8M8 12l4-4" stroke="#b5b9bb" stroke-width="1.500"/></svg>
</footer>
<div class="watermark">
  <div class="wm-name"><span class="fire">野</span><span class="fire">火</span><span>论</span><span>坛</span></div>
  <div class="wm-url">www.proewildfire.cn</div>
  <svg class="flame" width="18" height="42"><path d="M4 0q12 8 13 22 0 14-13 20l-4-4q10-14 2-30 6 6 7 14Q11 8 4 0z" fill="#ff6633"/></svg>
</div>
</div>
</body>
</html>
```
FILE: styles.css
```css
* { box-sizing: border-box; }
html, body { height: 100%; margin: 0; }
body {
  font: 12px/16px "Noto Sans", "Noto Sans CJK SC", sans-serif;
  color: #32373a;
  background: #b7bcbf;
}
.defs { position: absolute; width: 0; height: 0; }
button { font: inherit; color: inherit; background: none; border: 0; padding: 0; margin: 0; white-space: nowrap; }
svg { flex: none; display: block; overflow: visible; }

.window { position: relative; display: flex; flex-direction: column; height: 100vh; padding: 4px; }

.titlebar { display: flex; align-items: center; height: 28px; flex: none; background: #dae0e0; }
.brand { display: flex; align-items: center; gap: 7px; height: 24px; padding: 0 11px 0 12px; border-right: 1px solid #aeb3b4; font: 500 17px/20px Inter, sans-serif; color: #4a4f52; }
.brand sup { font-size: 8px; line-height: 8px; margin: 0 0 8px -8px; }
.caption { flex: 1; text-align: center; font-size: 13px; color: #b4b9bb; padding-right: 12px; }
.wincontrols { display: flex; gap: 17px; padding-right: 12px; color: #a9aeb0; }

.tabs { display: flex; flex: none; height: 29px; background: #3c4446; color: #fff; font-size: 13px; }
.tabs > button { padding: 0 24px 2px 23px; }
.tabs .file { padding: 0 20px 2px; background: linear-gradient(160deg, #66cf42, #53ab3a); }
.tabs .active { background: #f8f9fd; color: #3d7f22; }
.tabtools { display: flex; align-items: center; gap: 8px; margin-left: auto; padding: 0 4px 2px 0; }
.help { width: 16px; height: 16px; border-radius: 50%; background: #262c2e; font: bold 13px/16px "Open Sans", sans-serif; }

.ribbon { display: flex; flex: none; height: 113px; padding: 1px 0 2px; background: #f8f9fd; border-bottom: 1px solid #aebcbe; }
.group { display: flex; flex-direction: column; padding: 0 3px; border-right: 1px solid #b3b8ba; }
.group.flat { padding-left: 7px; }
.group.datum { padding-right: 7px; }
.body { display: flex; gap: 4px; flex: 1; }
.big { display: flex; flex-direction: column; align-items: center; width: 40px; padding-top: 5px; line-height: 18px; }
.big > svg:first-child { margin-bottom: 9px; }
.big .dn { margin-top: 5px; }
.big.slim { width: 32px; }
.big.wide { width: 56px; }
.big.widest { width: 63px; }
.col { display: flex; flex-direction: column; }
.col button { display: flex; align-items: center; gap: 4px; height: 28px; padding-right: 4px; }
.col .dn { margin-left: 3px; }
.col.off { color: #abaeb0; }
.col .on { color: #32373a; }
.dn, .label svg, .filter svg, .quick svg { color: #5c6266; }
.off .dn, .quick .dim svg { color: #a6a8aa; }
.label { display: flex; align-items: center; justify-content: center; gap: 3px; height: 22px; }

.quick { display: flex; align-items: center; gap: 7px; flex: none; height: 24px; padding-left: 5px; background: #f8f9fd; border-bottom: 1px solid #aebcbe; }
.quick button { display: flex; align-items: center; gap: 7px; }
.quick .shut { padding-left: 6px; }
.quick .more { align-self: stretch; border-left: 1px solid #b3b8ba; padding-left: 8px; }

main { display: flex; flex: 1; min-height: 0; }
aside { width: 271px; flex: none; background: #f6fafb; border-right: 3px solid #dae0e0; }
.ptabs { display: flex; height: 30px; margin-right: -3px; background: #dae0e0; }
.ptabs button { display: flex; align-items: center; gap: 4px; padding: 0 8px; }
.ptabs .active { background: #f6fafb; padding: 0 9px 0 11px; gap: 6px; }
.phead { display: flex; align-items: center; height: 28px; gap: 12px; padding: 0 8px 0 28px; }
.phead span { margin-right: auto; }
.phead button { display: flex; align-items: center; gap: 9px; color: #5c6266; }
.filter { display: flex; align-items: center; padding-left: 12px; gap: 4px; }
.search { position: relative; width: 188px; height: 29px; }
.search input { width: 100%; height: 100%; padding: 0 24px 0 6px; border: 1px solid #a0aeb2; background: #fff; font: inherit; }
.search button { position: absolute; right: 6px; top: 10px; }
.filter > button { padding: 0 2px; }
.filter > button:last-child { padding: 0 5px; }
.tree { list-style: none; margin: 5px 0 0; padding: 0 0 0 12px; }
.tree li { display: flex; align-items: center; gap: 6px; height: 24px; }
.tree .child { padding-left: 19px; gap: 5px; }
hr { height: 2px; margin: 6px 5px 0 8px; border: 0; background: #5cc83c; }

.viewport { position: relative; flex: 1; display: flex; justify-content: center; overflow: hidden; background: #e8eaee; }
.model { overflow: hidden; }
.cad { font: 14px "Liberation Mono", monospace; fill: #111; }
.cad .name { fill: #7c4a60; }
.viewtools { position: absolute; top: 7px; left: 50%; transform: translateX(-50%); display: flex; align-items: center; justify-content: space-between; width: 374px; height: 33px; padding: 0 4px; background: #fafbfc; border: 1px solid #9a9ea0; }
.viewtools button { position: relative; width: 22px; height: 22px; padding: 3px; }
.viewtools .pressed, footer .pressed { background: #dfe1e3; border: 1px solid #aeb2b4; padding: 2px; }
.menu::after { content: ""; position: absolute; right: -1px; bottom: 0; border: 2px solid; border-color: transparent #444 #444 transparent; }

footer { display: flex; align-items: center; flex: none; height: 38px; padding: 6px 3px 0 6px; background: #f6fafb; border-top: 1px solid #aebcbe; }
footer > button { margin-right: 10px; }
footer > button.pressed { width: 22px; height: 22px; margin-right: 7px; padding: 1px 4px; }
.message { flex: 1; margin: 0 0 0 2px; padding-left: 6px; height: 22px; font-size: 11px; line-height: 12px; border-left: 1px solid #b3b8ba; }
.message::before { content: ""; display: inline-block; width: 5px; height: 5px; margin-right: 5px; border-radius: 50%; background: #17688d; vertical-align: 2px; }
.find { display: flex; align-items: center; height: 30px; margin: -8px 97px 0 0; padding: 0 2px; border: 1px solid #b3b8ba; border-width: 0 1px; }
.find::before { content: ""; width: 1px; height: 30px; margin: 0 42px 0 -44px; background: #b3b8ba; }
.find button { display: grid; place-items: center; width: 28px; height: 24px; border: 1px solid #c2c5c8; background: #f8f8fa; }
.find .pick { width: 15px; border-left: 0; color: #5c6266; }
.combo { position: relative; width: 177px; height: 25px; margin: -6px 3px 0 0; }
.combo select { appearance: none; width: 100%; height: 100%; padding: 0 8px; border: 1px solid #b0b4b6; border-radius: 0; background: #f8f8fa; font: inherit; color: #3c5468; }
.pull { position: absolute; right: 1px; top: 1px; display: grid; place-items: center; width: 15px; height: 23px; border-left: 1px solid #c2c5c8; color: #5c6266; pointer-events: none; }
.grip { align-self: flex-end; margin-bottom: 3px; }

.watermark { position: absolute; right: 19px; bottom: 8px; width: 168px; pointer-events: none; }
.wm-name { display: flex; justify-content: space-between; font: italic 300 38px/44px "Noto Sans CJK SC", sans-serif; color: #000; }
.wm-name .fire { color: #ff6633; }
.wm-url { padding-left: 3px; font: italic 15px/16px "DejaVu Sans", sans-serif; color: #8c8f92; }
.flame { position: absolute; left: 64px; top: -18px; }
```
